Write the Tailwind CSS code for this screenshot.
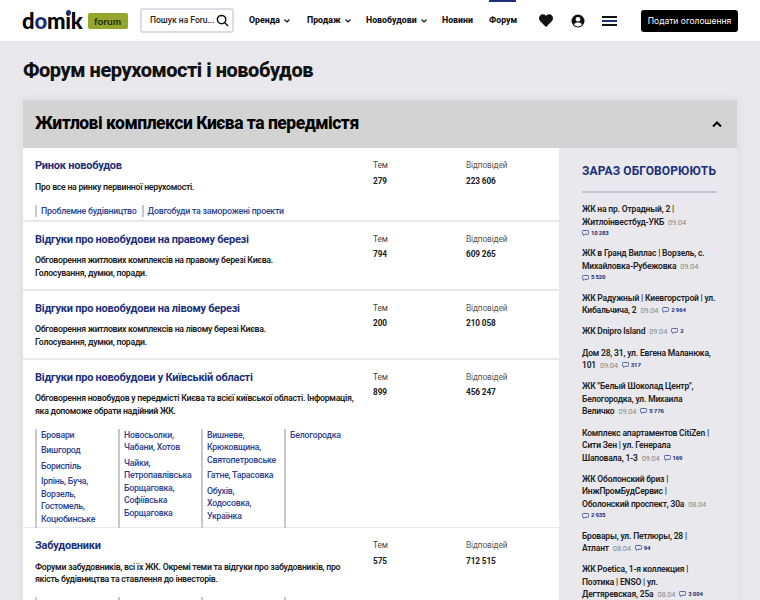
<!DOCTYPE html>
<html lang="uk">
<head>
  <meta charset="UTF-8" />
  <title>Форум нерухомості і новобудов</title>
  <script src="https://cdn.jsdelivr.net/npm/@tailwindcss/browser@4"></script>
</head>
<body class="h-[600px] overflow-hidden bg-[#e8e8ed] font-['Roboto',sans-serif] text-black">
  <!-- шапка -->
  <header class="h-[41px] bg-white flex items-center pl-[22px] relative">
    <div class="flex items-center w-[118px] shrink-0">
      <span class="text-[22px] leading-none font-black font-['Lato',sans-serif] tracking-[-0.2px]">d<span class="text-[#1b2f7a]">o</span>m<span class="relative">i<span class="absolute left-[0.5px] top-[3px] w-[5px] h-[5px] rounded-full bg-[#1b2f7a]"></span></span>k</span>
      <span class="ml-[5px] w-[40px] h-[16px] bg-[#94a62b] rounded-[2px] text-[10px] leading-[16px] font-bold text-center text-[#23280a] font-['Lato',sans-serif]">forum</span>
    </div>
    <div class="w-[94px] h-[25px] border-2 border-[#dcdce2] rounded-[3px] flex items-center justify-between pl-[8px] pr-[3px] text-[8.5px] font-medium text-[#222] shrink-0 whitespace-nowrap">
      <span>Пошук на Foru...</span>
      <svg width="13" height="13" viewBox="0 0 14 14" fill="none" stroke="#111" stroke-width="1.6"><circle cx="6" cy="6" r="4.5"/><path d="M9.5 9.5L13 13"/></svg>
    </div>
    <nav class="flex items-center ml-[15px] text-[8.75px] font-extrabold text-[#111]">
      <span class="flex items-center w-[58px]">Оренда<svg class="ml-[4px]" width="6" height="4" viewBox="0 0 6 4" fill="none" stroke="#111" stroke-width="1.2"><path d="M.5.5L3 3 5.500.5"/></svg></span>
      <span class="flex items-center w-[59px]">Продаж<svg class="ml-[4px]" width="6" height="4" viewBox="0 0 6 4" fill="none" stroke="#111" stroke-width="1.2"><path d="M.5.5L3 3 5.500.5"/></svg></span>
      <span class="flex items-center w-[76px]">Новобудови<svg class="ml-[4px]" width="6" height="4" viewBox="0 0 6 4" fill="none" stroke="#111" stroke-width="1.2"><path d="M.5.5L3 3 5.500.5"/></svg></span>
      <span class="w-[47px]">Новини</span>
      <span class="w-[27px]">Форум</span>
    </nav>
    <div class="absolute left-[489px] top-0 w-[27px] h-[2px] bg-[#1b2f7a]"></div>
    <div class="flex items-center ml-[23px]">
      <svg width="14" height="13" viewBox="0 0 14 13" fill="#111"><path d="M7 13L1.200 7.200C-.4 5.600-.4 3 1.100 1.400 2.600-.2 5.200-.1 6.700 1.500L7 1.800l.3-.3C8.800-.1 11.400-.2 12.900 1.400c1.500 1.600 1.500 4.200-.1 5.800z"/></svg>
      <svg class="ml-[18px]" width="14" height="14" viewBox="0 0 14 14"><circle cx="7" cy="7" r="6.500" fill="#111"/><circle cx="7" cy="5.300" r="2.300" fill="#fff"/><path d="M2.900 10.500C4 8.900 5.400 8.400 7 8.400s3 .5 4.100 2.100C10 11.800 8.600 12.400 7 12.400s-3-.6-4.100-1.900z" fill="#fff"/></svg>
      <div class="ml-[17px] w-[15px] flex flex-col gap-[2px]">
        <div class="h-[2px] bg-[#111]"></div>
        <div class="h-[2px] bg-[#1b2f7a]"></div>
        <div class="h-[2px] bg-[#111]"></div>
      </div>
    </div>
    <div class="ml-[24px] w-[97px] h-[22px] bg-black rounded-[3px] text-white text-[8.5px] leading-[22px] text-center font-['Inter',sans-serif] whitespace-nowrap">Подати оголошення</div>
  </header>

  <main class="px-[23px]">
    <h1 class="h-[59px] pt-[16px] text-[20px] leading-[26px] tracking-[-0.47px] font-extrabold text-[#111]">Форум нерухомості і новобудов</h1>

    <section class="shadow-[0_0_12px_rgba(0,0,0,0.06)]">
      <div class="h-[48px] bg-[#d3d3d3] flex items-center justify-between pl-[12px] pr-[15px]">
        <h2 class="text-[17.5px] tracking-[-0.5px] font-extrabold leading-none">Житлові комплекси Києва та передмістя</h2>
        <svg width="10" height="6" viewBox="0 0 10 6" fill="none" stroke="#000" stroke-width="2"><path d="M1 5.500L5 1.500l4 4"/></svg>
      </div>

      <div class="flex">
        <div class="w-[536px] shrink-0 flex flex-col gap-[1.500px] bg-[#e8e8ed]">
          <!-- Ринок новобудов -->
          <article class="h-[72px] bg-white pl-[12px] flex">
            <div class="w-[338px] pt-[11px]">
              <h3 class="text-[11px] tracking-[-0.24px] leading-[14px] font-bold text-[#1b2f7a]">Ринок новобудов</h3>
              <p class="mt-[7.500px] text-[8.750px] tracking-[-0.28px] leading-[12.500px] font-semibold text-[#222]">Про все на ринку первинної нерухомості.</p>
              <div class="mt-[11.500px] flex text-[8.750px] tracking-[-0.22px] leading-[12px] font-medium text-[#2a4390]">
                <span class="border-l-2 border-[#c8c8cc] pl-[4px] pr-[5px]">Проблемне будівництво</span>
                <span class="border-l-2 border-[#c8c8cc] pl-[4px]">Довгобуди та заморожені проекти</span>
              </div>
            </div>
            <div class="w-[93px] pt-[11px] text-[8.250px] tracking-[-0.1px] leading-[12px]">
              <p class="text-[#444]">Тем</p><p class="mt-[3.500px] font-bold text-[#222]">279</p>
            </div>
            <div class="pt-[11px] text-[8.250px] tracking-[-0.1px] leading-[12px]">
              <p class="text-[#555]">Відповідей</p><p class="mt-[3.500px] font-bold text-[#222]">223 606</p>
            </div>
          </article>

          <!-- правий берег -->
          <article class="h-[67.500px] bg-white pl-[12px] flex">
            <div class="w-[338px] pt-[11px]">
              <h3 class="text-[11px] tracking-[-0.24px] leading-[14px] font-bold text-[#1b2f7a]">Відгуки про новобудови на правому березі</h3>
              <p class="mt-[7.500px] w-[245px] text-[8.750px] tracking-[-0.28px] leading-[12.500px] font-semibold text-[#222]">Обговорення житлових комплексів на правому березі Києва. Голосування, думки, поради.</p>
            </div>
            <div class="w-[93px] pt-[11px] text-[8.250px] tracking-[-0.1px] leading-[12px]">
              <p class="text-[#444]">Тем</p><p class="mt-[3.500px] font-bold text-[#222]">794</p>
            </div>
            <div class="pt-[11px] text-[8.250px] tracking-[-0.1px] leading-[12px]">
              <p class="text-[#555]">Відповідей</p><p class="mt-[3.500px] font-bold text-[#222]">609 265</p>
            </div>
          </article>

          <!-- лівий берег -->
          <article class="h-[67.500px] bg-white pl-[12px] flex">
            <div class="w-[338px] pt-[11px]">
              <h3 class="text-[11px] tracking-[-0.24px] leading-[14px] font-bold text-[#1b2f7a]">Відгуки про новобудови на лівому березі</h3>
              <p class="mt-[7.500px] w-[245px] text-[8.750px] tracking-[-0.28px] leading-[12.500px] font-semibold text-[#222]">Обговорення житлових комплексів на лівому березі Києва. Голосування, думки, поради.</p>
            </div>
            <div class="w-[93px] pt-[11px] text-[8.250px] tracking-[-0.1px] leading-[12px]">
              <p class="text-[#444]">Тем</p><p class="mt-[3.500px] font-bold text-[#222]">200</p>
            </div>
            <div class="pt-[11px] text-[8.250px] tracking-[-0.1px] leading-[12px]">
              <p class="text-[#555]">Відповідей</p><p class="mt-[3.500px] font-bold text-[#222]">210 058</p>
            </div>
          </article>

          <!-- Київська область -->
          <article class="h-[167px] bg-white pl-[12px] flex">
            <div class="w-[338px] pt-[11px]">
              <h3 class="text-[11px] tracking-[-0.24px] leading-[14px] font-bold text-[#1b2f7a]">Відгуки про новобудови у Київській області</h3>
              <p class="mt-[7.500px] w-[322px] text-[8.750px] tracking-[-0.28px] leading-[12.500px] font-semibold text-[#222]">Обговорення новобудов у передмісті Києва та всієї київської області. Інформація, яка допоможе обрати надійний ЖК.</p>
              <div class="mt-[11.500px] flex text-[8.750px] tracking-[-0.22px] leading-[12.500px] font-medium text-[#2a4390] h-[99px]">
                <div class="w-[83px] border-l-2 border-[#c8c8cc] pl-[4px] flex flex-col gap-[3px]">
                  <span>Бровари</span><span>Вишгород</span><span>Бориспіль</span><span class="w-[60px]">Ірпінь, Буча, Ворзель, Гостомель, Коцюбинське</span>
                </div>
                <div class="w-[83px] border-l-2 border-[#c8c8cc] pl-[4px] flex flex-col gap-[3px]">
                  <span>Новосьолки, Чабани, Хотов</span><span>Чайки, Петропавлівська Борщаговка, Софіївська Борщаговка</span>
                </div>
                <div class="w-[83px] border-l-2 border-[#c8c8cc] pl-[4px] flex flex-col gap-[3px]">
                  <span>Вишневе, Крюковщина, Святопетровське</span><span>Гатне, Тарасовка</span><span class="w-[60px]">Обухів, Ходосовка, Українка</span>
                </div>
                <div class="border-l-2 border-[#c8c8cc] pl-[4px]">Белогородка</div>
              </div>
            </div>
            <div class="w-[93px] pt-[11px] text-[8.250px] tracking-[-0.1px] leading-[12px]">
              <p class="text-[#444]">Тем</p><p class="mt-[3.500px] font-bold text-[#222]">899</p>
            </div>
            <div class="pt-[11px] text-[8.250px] tracking-[-0.1px] leading-[12px]">
              <p class="text-[#555]">Відповідей</p><p class="mt-[3.500px] font-bold text-[#222]">456 247</p>
            </div>
          </article>

          <!-- Забудовники -->
          <article class="h-[100px] bg-white pl-[12px] flex">
            <div class="w-[338px] pt-[11px]">
              <h3 class="text-[11px] tracking-[-0.24px] leading-[14px] font-bold text-[#1b2f7a]">Забудовники</h3>
              <p class="mt-[7.500px] w-[322px] text-[8.750px] tracking-[-0.28px] leading-[12.500px] font-semibold text-[#222]">Форуми забудовників, всі їх ЖК. Окремі теми та відгуки про забудовників, про якість будівництва та ставлення до інвесторів.</p>
              <div class="mt-[11.500px] flex h-[20px]">
                <div class="w-[83px] border-l-2 border-[#c8c8cc]"></div>
                <div class="w-[83px] border-l-2 border-[#c8c8cc]"></div>
                <div class="w-[83px] border-l-2 border-[#c8c8cc]"></div>
                <div class="border-l-2 border-[#c8c8cc]"></div>
              </div>
            </div>
            <div class="w-[93px] pt-[11px] text-[8.250px] tracking-[-0.1px] leading-[12px]">
              <p class="text-[#444]">Тем</p><p class="mt-[3.500px] font-bold text-[#222]">575</p>
            </div>
            <div class="pt-[11px] text-[8.250px] tracking-[-0.1px] leading-[12px]">
              <p class="text-[#555]">Відповідей</p><p class="mt-[3.500px] font-bold text-[#222]">712 515</p>
            </div>
          </article>
        </div>

        <!-- зараз обговорюють -->
        <aside class="w-[178px] bg-[#e8e8ed] pl-[23px] pr-[20px] pt-[16px] text-[8.500px] tracking-[-0.18px] leading-[12.500px] font-semibold text-[#222]">
          <h4 class="text-[12px] leading-[15px] font-bold text-[#1b2f7a] tracking-[0.1px] whitespace-nowrap">ЗАРАЗ ОБГОВОРЮЮТЬ</h4>
          <div class="mt-[12px] h-[2px] bg-[#c4c4cc] mb-[10px]"></div>
          <div class="flex flex-col gap-[8.750px]">
            <p>ЖК на пр. Отрадный, 2 |<br>Житлоінвестбуд-УКБ <span class="ml-[2px] text-[7.500px] leading-none font-normal text-[#888]">09.04</span> <span class="flex h-[10.500px] items-center text-[6px] font-bold text-[#1b2f7a]"><svg class="mr-[2px]" width="7" height="6" viewBox="0 0 7 6" fill="none" stroke="#2a4390" stroke-width=".8"><path d="M1.300.5h4.400q1 0 1 1v1.800q0 1-1 1H3L1.800 5.500V4.300H1.300q-1 0-1-1V1.500q0-1 1-1z"/></svg>10 283</span></p>
            <p>ЖК в Гранд Виллас | Ворзель, с.<br>Михайловка-Рубежовка <span class="ml-[2px] text-[7.500px] leading-none font-normal text-[#888]">09.04</span> <span class="flex h-[10.500px] items-center text-[6px] font-bold text-[#1b2f7a]"><svg class="mr-[2px]" width="7" height="6" viewBox="0 0 7 6" fill="none" stroke="#2a4390" stroke-width=".8"><path d="M1.300.5h4.400q1 0 1 1v1.800q0 1-1 1H3L1.800 5.500V4.300H1.300q-1 0-1-1V1.500q0-1 1-1z"/></svg>5 520</span></p>
            <p>ЖК Радужный | Киевгорстрой | ул.<br>Кибальчича, 2 <span class="ml-[2px] text-[7.500px] leading-none font-normal text-[#888]">09.04</span> <span class="ml-[2px] inline-flex items-center leading-none text-[6px] font-bold text-[#1b2f7a]"><svg class="mr-[2px]" width="7" height="6" viewBox="0 0 7 6" fill="none" stroke="#2a4390" stroke-width=".8"><path d="M1.300.5h4.400q1 0 1 1v1.800q0 1-1 1H3L1.800 5.500V4.300H1.300q-1 0-1-1V1.500q0-1 1-1z"/></svg>2 964</span></p>
            <p>ЖК Dnipro Island <span class="ml-[2px] text-[7.500px] leading-none font-normal text-[#888]">09.04</span> <span class="ml-[2px] inline-flex items-center leading-none text-[6px] font-bold text-[#1b2f7a]"><svg class="mr-[2px]" width="7" height="6" viewBox="0 0 7 6" fill="none" stroke="#2a4390" stroke-width=".8"><path d="M1.300.5h4.400q1 0 1 1v1.800q0 1-1 1H3L1.800 5.500V4.300H1.300q-1 0-1-1V1.500q0-1 1-1z"/></svg>2</span></p>
            <p>Дом 28, 31, ул. Евгена Маланюка,<br>101 <span class="ml-[2px] text-[7.500px] leading-none font-normal text-[#888]">09.04</span> <span class="ml-[2px] inline-flex items-center leading-none text-[6px] font-bold text-[#1b2f7a]"><svg class="mr-[2px]" width="7" height="6" viewBox="0 0 7 6" fill="none" stroke="#2a4390" stroke-width=".8"><path d="M1.300.5h4.400q1 0 1 1v1.800q0 1-1 1H3L1.800 5.500V4.300H1.300q-1 0-1-1V1.500q0-1 1-1z"/></svg>317</span></p>
            <p>ЖК "Белый Шоколад Центр",<br>Белогородка, ул. Михаила<br>Величко <span class="ml-[2px] text-[7.500px] leading-none font-normal text-[#888]">09.04</span> <span class="ml-[2px] inline-flex items-center leading-none text-[6px] font-bold text-[#1b2f7a]"><svg class="mr-[2px]" width="7" height="6" viewBox="0 0 7 6" fill="none" stroke="#2a4390" stroke-width=".8"><path d="M1.300.5h4.400q1 0 1 1v1.800q0 1-1 1H3L1.800 5.500V4.300H1.300q-1 0-1-1V1.500q0-1 1-1z"/></svg>5 776</span></p>
            <p>Комплекс апартаментов CitiZen |<br>Сити Зен | ул. Генерала<br>Шаповала, 1-3 <span class="ml-[2px] text-[7.500px] leading-none font-normal text-[#888]">09.04</span> <span class="ml-[2px] inline-flex items-center leading-none text-[6px] font-bold text-[#1b2f7a]"><svg class="mr-[2px]" width="7" height="6" viewBox="0 0 7 6" fill="none" stroke="#2a4390" stroke-width=".8"><path d="M1.300.5h4.400q1 0 1 1v1.800q0 1-1 1H3L1.800 5.500V4.300H1.300q-1 0-1-1V1.500q0-1 1-1z"/></svg>169</span></p>
            <p>ЖК Оболонский бриз |<br>ИнжПромБудСервис |<br>Оболонский проспект, 30а <span class="ml-[2px] text-[7.500px] leading-none font-normal text-[#888]">08.04</span> <span class="flex h-[10.500px] items-center text-[6px] font-bold text-[#1b2f7a]"><svg class="mr-[2px]" width="7" height="6" viewBox="0 0 7 6" fill="none" stroke="#2a4390" stroke-width=".8"><path d="M1.300.5h4.400q1 0 1 1v1.800q0 1-1 1H3L1.800 5.500V4.300H1.300q-1 0-1-1V1.500q0-1 1-1z"/></svg>2 935</span></p>
            <p>Бровары, ул. Петлюры, 28 |<br>Атлант <span class="ml-[2px] text-[7.500px] leading-none font-normal text-[#888]">08.04</span> <span class="ml-[2px] inline-flex items-center leading-none text-[6px] font-bold text-[#1b2f7a]"><svg class="mr-[2px]" width="7" height="6" viewBox="0 0 7 6" fill="none" stroke="#2a4390" stroke-width=".8"><path d="M1.300.5h4.400q1 0 1 1v1.800q0 1-1 1H3L1.800 5.500V4.300H1.300q-1 0-1-1V1.500q0-1 1-1z"/></svg>94</span></p>
            <p>ЖК Poetica, 1-я коллекция |<br>Поэтика | ENSO | ул.<br>Дегтяревская, 25а <span class="ml-[2px] text-[7.500px] leading-none font-normal text-[#888]">08.04</span> <span class="ml-[2px] inline-flex items-center leading-none text-[6px] font-bold text-[#1b2f7a]"><svg class="mr-[2px]" width="7" height="6" viewBox="0 0 7 6" fill="none" stroke="#2a4390" stroke-width=".8"><path d="M1.300.5h4.400q1 0 1 1v1.800q0 1-1 1H3L1.800 5.500V4.300H1.300q-1 0-1-1V1.500q0-1 1-1z"/></svg>3 004</span></p>
          </div>
        </aside>
      </div>
    </section>
  </main>
</body>
</html>
